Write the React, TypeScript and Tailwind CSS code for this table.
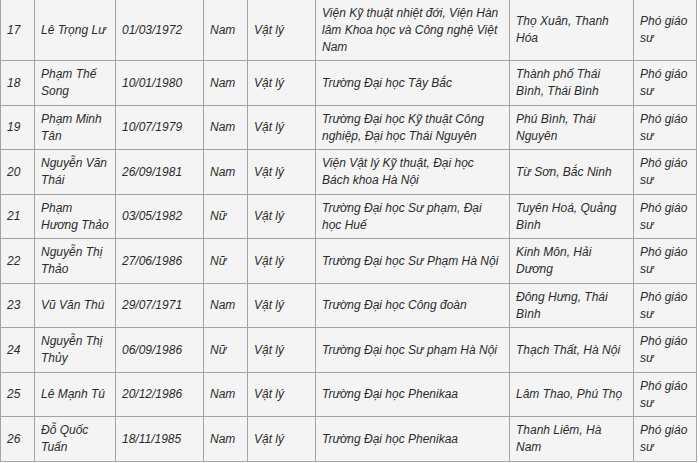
import React from 'react';

const rows = [
  ['17', 'Lê Trọng Lư', '01/03/1972', 'Nam', 'Vật lý', 'Viện Kỹ thuật nhiệt đới, Viện Hàn lâm Khoa học và Công nghệ Việt Nam', 'Thọ Xuân, Thanh Hóa'],
  ['18', 'Phạm Thế Song', '10/01/1980', 'Nam', 'Vật lý', 'Trường Đại học Tây Bắc', 'Thành phố Thái Bình, Thái Bình'],
  ['19', 'Phạm Minh Tân', '10/07/1979', 'Nam', 'Vật lý', 'Trường Đại học Kỹ thuật Công nghiệp, Đại học Thái Nguyên', 'Phú Bình, Thái Nguyên'],
  ['20', 'Nguyễn Văn Thái', '26/09/1981', 'Nam', 'Vật lý', 'Viện Vật lý Kỹ thuật, Đại học Bách khoa Hà Nội', 'Từ Sơn, Bắc Ninh'],
  ['21', 'Phạm Hương Thảo', '03/05/1982', 'Nữ', 'Vật lý', 'Trường Đại học Sư phạm, Đại học Huế', 'Tuyên Hoá, Quảng Bình'],
  ['22', 'Nguyễn Thị Thảo', '27/06/1986', 'Nữ', 'Vật lý', 'Trường Đại học Sư Phạm Hà Nội', 'Kinh Môn, Hải Dương'],
  ['23', 'Vũ Văn Thú', '29/07/1971', 'Nam', 'Vật lý', 'Trường Đại học Công đoàn', 'Đông Hưng, Thái Bình'],
  ['24', 'Nguyễn Thị Thủy', '06/09/1986', 'Nữ', 'Vật lý', 'Trường Đại học Sư phạm Hà Nội', 'Thạch Thất, Hà Nội'],
  ['25', 'Lê Mạnh Tú', '20/12/1986', 'Nam', 'Vật lý', 'Trường Đại học Phenikaa', 'Lâm Thao, Phú Thọ'],
  ['26', 'Đỗ Quốc Tuấn', '18/11/1985', 'Nam', 'Vật lý', 'Trường Đại học Phenikaa', 'Thanh Liêm, Hà Nam'],
];

const widths = ['w-[34px]', 'w-[81px]', 'w-[88px]', 'w-[44px]', 'w-[68px]', 'w-[194px]', 'w-[124px]', 'w-[63px]'];

export default function App() {
  return (
    <div className="bg-white w-[700px] h-[463px] overflow-hidden">
      <table className="-mt-px table-fixed border-collapse w-[697px] bg-[#f4f4f4] text-[#2b2b2b] italic text-[12px] leading-[16.75px] font-['Liberation_Sans',Arial,sans-serif]">
        <colgroup>
          {widths.map((w, i) => (
            <col key={i} className={w} />
          ))}
        </colgroup>
        <tbody>
          {rows.map((r) => (
            <tr key={r[0]}>
              {[...r, 'Phó giáo sư'].map((cell, i) => (
                <td key={i} className="border border-[#a3a3a3] px-[6px] py-[5px] align-middle">
                  {cell}
                </td>
              ))}
            </tr>
          ))}
        </tbody>
      </table>
    </div>
  );
}
